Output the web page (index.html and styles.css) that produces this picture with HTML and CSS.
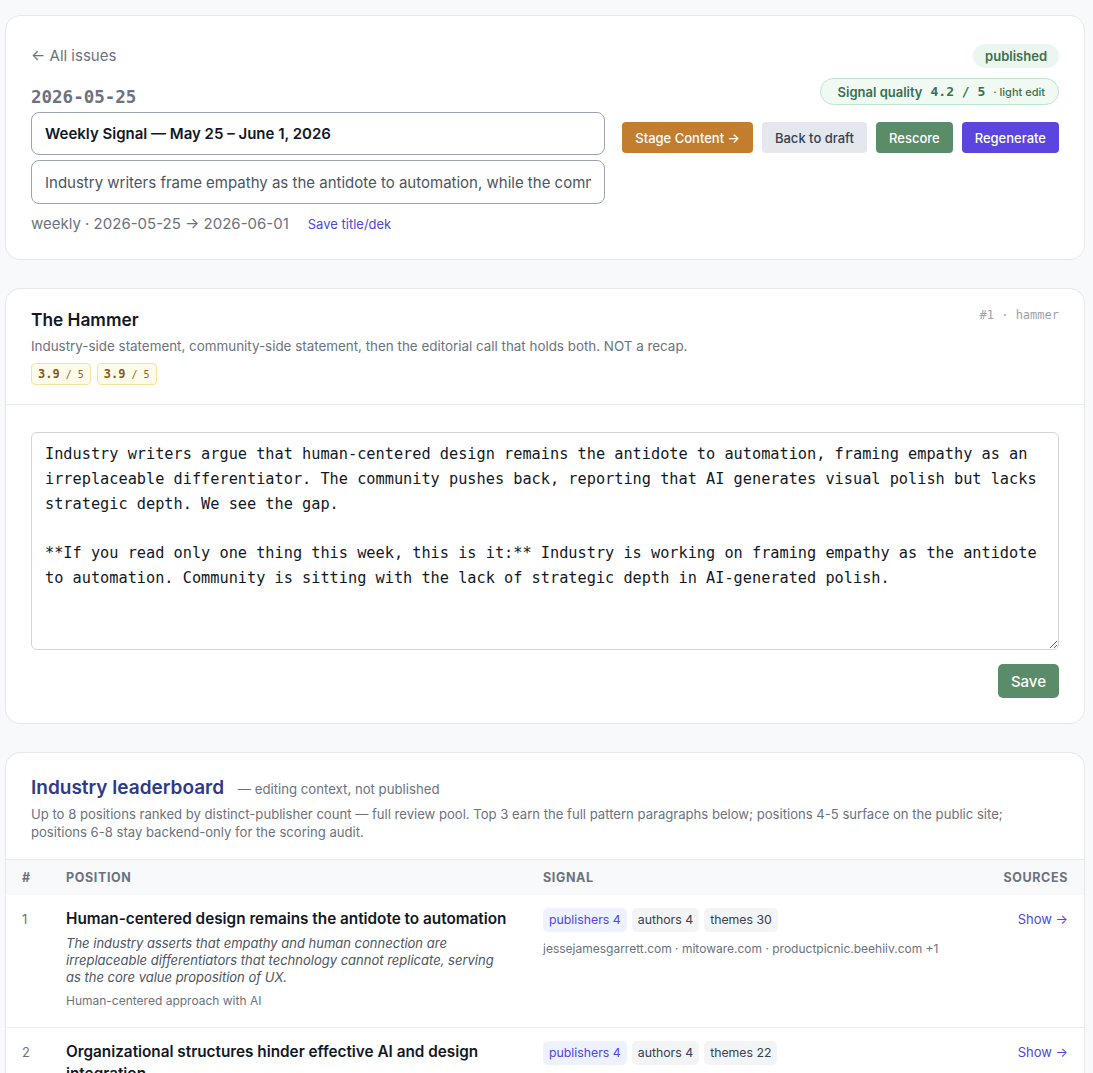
FILE: index.html
```html
<!DOCTYPE html>
<html lang="en">
<head>
    <meta charset="UTF-8">
    <meta name="viewport" content="width=device-width, initial-scale=1.0">
    <title>Weekly Signal — 2026-05-25</title>
    <link rel="stylesheet" href="styles.css">
</head>
<body>

<div class="page">

    <section class="card issue-head">
        <div class="head-left">
            <a class="back" href="#">← All issues</a>
            <div class="issue-date">2026-05-25</div>
            <input class="field field-title" type="text" value="Weekly Signal — May 25 – June 1, 2026">
            <input class="field field-dek" type="text" value="Industry writers frame empathy as the antidote to automation, while the community reports AI polish without depth.">
            <div class="issue-meta">
                <span>weekly · 2026-05-25 → 2026-06-01</span>
                <a class="save-link" href="#">Save title/dek</a>
            </div>
        </div>
        <div class="head-right">
            <span class="pill-status">published</span>
            <span class="pill-quality">Signal quality <b class="mono">4.2 / 5</b> <small>· light edit</small></span>
            <div class="actions">
                <button class="btn btn-stage">Stage Content →</button>
                <button class="btn btn-draft">Back to draft</button>
                <button class="btn btn-green">Rescore</button>
                <button class="btn btn-indigo">Regenerate</button>
            </div>
        </div>
    </section>

    <section class="card">
        <div class="card-head">
            <div class="section-top">
                <h2 class="section-title">The Hammer</h2>
                <span class="section-tag">#1 · hammer</span>
            </div>
            <p class="section-desc">Industry-side statement, community-side statement, then the editorial call that holds both. NOT a recap.</p>
            <div class="scores">
                <span class="score"><b>3.9</b> / 5</span>
                <span class="score"><b>3.9</b> / 5</span>
            </div>
        </div>
        <div class="card-body">
            <textarea class="editor" rows="8">Industry writers argue that human-centered design remains the antidote to automation, framing empathy as an irreplaceable differentiator. The community pushes back, reporting that AI generates visual polish but lacks strategic depth. We see the gap.

**If you read only one thing this week, this is it:** Industry is working on framing empathy as the antidote to automation. Community is sitting with the lack of strategic depth in AI-generated polish.</textarea>
            <div class="save-row">
                <button class="btn btn-green btn-save">Save</button>
            </div>
        </div>
    </section>

    <section class="card">
        <div class="card-head board-head">
            <h2 class="board-title">Industry leaderboard <span>— editing context, not published</span></h2>
            <p class="board-desc">Up to 8 positions ranked by distinct-publisher count — full review pool. Top 3 earn the full pattern paragraphs below; positions 4-5 surface on the public site; positions 6-8 stay backend-only for the scoring audit.</p>
        </div>
        <table class="board">
            <thead>
                <tr>
                    <th class="col-num">#</th>
                    <th class="col-pos">Position</th>
                    <th>Signal</th>
                    <th class="col-src">Sources</th>
                </tr>
            </thead>
            <tbody>
                <tr>
                    <td class="col-num">1</td>
                    <td class="col-pos">
                        <div class="pos-title">Human-centered design remains the antidote to automation</div>
                        <div class="pos-summary">The industry asserts that empathy and human connection are irreplaceable differentiators that technology cannot replicate, serving as the core value proposition of UX.</div>
                        <div class="pos-theme">Human-centered approach with AI</div>
                    </td>
                    <td>
                        <div class="chips">
                            <span class="chip chip-pub">publishers 4</span>
                            <span class="chip">authors 4</span>
                            <span class="chip">themes 30</span>
                        </div>
                        <div class="domains">jessejamesgarrett.com · mitoware.com · productpicnic.beehiiv.com +1</div>
                    </td>
                    <td class="col-src"><a class="show" href="#">Show →</a></td>
                </tr>
                <tr>
                    <td class="col-num">2</td>
                    <td class="col-pos">
                        <div class="pos-title">Organizational structures hinder effective AI and design integration</div>
                        <div class="pos-summary">Teams report that siloed org charts keep design and AI work from meeting early enough to matter.</div>
                        <div class="pos-theme">Org design and AI adoption</div>
                    </td>
                    <td>
                        <div class="chips">
                            <span class="chip chip-pub">publishers 4</span>
                            <span class="chip">authors 4</span>
                            <span class="chip">themes 22</span>
                        </div>
                        <div class="domains">uxdesign.cc · nngroup.com · medium.com +1</div>
                    </td>
                    <td class="col-src"><a class="show" href="#">Show →</a></td>
                </tr>
            </tbody>
        </table>
    </section>

</div>

</body>
</html>
```

FILE: styles.css
```css
body {
    margin: 0;
    background: #f8f9fb;
    font-family: Inter, "Liberation Sans", sans-serif;
    color: #111827;
}
.page {
    width: 1080px;
    margin: 15px 0 0 5px;
    display: flex;
    flex-direction: column;
    gap: 28px;
}
.card {
    background: white;
    border: 1px solid #e5e7eb;
    border-radius: 15px;
    overflow: hidden;
}
.mono {
    font-family: "DejaVu Sans Mono", "Liberation Mono", monospace;
}

/* issue header */
.issue-head {
    display: flex;
    justify-content: space-between;
    padding: 28px 25px 25px 25px;
}
.head-left {
    width: 574px;
    display: flex;
    flex-direction: column;
}
.back {
    font-size: 15px;
    line-height: 20px;
    color: #6b7280;
    text-decoration: none;
    margin-top: 2px;
}
.issue-date {
    font-family: "DejaVu Sans Mono", "Liberation Mono", monospace;
    font-weight: bold;
    font-size: 17.5px;
    line-height: 22px;
    color: #6b7280;
    margin-top: 20px;
}
.field {
    box-sizing: border-box;
    width: 100%;
    border: 1px solid #9ca3af;
    border-radius: 8px;
    padding: 0 13px;
    font-family: Inter, "Liberation Sans", sans-serif;
    font-size: 15px;
    background: white;
}
.field-title {
    height: 43px;
    margin-top: 4px;
    font-weight: 600;
    color: #111827;
}
.field-dek {
    height: 44px;
    margin-top: 5px;
    color: #4b5563;
}
.issue-meta {
    margin-top: 10px;
    font-size: 15px;
    line-height: 20px;
    color: #6b7280;
    display: flex;
    align-items: baseline;
    gap: 19px;
}
.save-link {
    font-size: 13px;
    color: #4f46e5;
    text-decoration: none;
}
.head-right {
    display: flex;
    flex-direction: column;
    align-items: flex-end;
}
.pill-status {
    height: 24px;
    line-height: 24px;
    padding: 0 12px;
    border-radius: 999px;
    background: #eaf6ee;
    color: #3e6e52;
    font-size: 13px;
    font-weight: 600;
}
.pill-quality {
    box-sizing: border-box;
    height: 27px;
    margin-top: 10px;
    padding: 0 13px 0 17px;
    display: flex;
    align-items: center;
    gap: 6px;
    border: 1px solid #bfe5cc;
    border-radius: 999px;
    background: #f0faf3;
    color: #3e6e52;
    font-size: 13px;
    font-weight: 600;
}
.pill-quality b {
    font-size: 13px;
    margin: 0 2px;
}
.pill-quality small {
    font-size: 11px;
    font-weight: 500;
}
.actions {
    display: flex;
    gap: 9px;
    margin-top: 17px;
}
.btn {
    height: 31px;
    padding: 0 13px;
    border: none;
    border-radius: 4px;
    font-family: Inter, "Liberation Sans", sans-serif;
    font-size: 13px;
    font-weight: 500;
    color: white;
    cursor: pointer;
}
.btn-stage { background: #c27d2f; }
.btn-draft { background: #e4e7ee; color: #374151; }
.btn-green { background: #5b8c69; }
.btn-indigo { background: #5a45de; }

/* section cards */
.card-head {
    padding: 19px 25px 19px 25px;
    border-bottom: 1px solid #e9ebef;
}
.section-top {
    display: flex;
    justify-content: space-between;
    align-items: flex-start;
}
.section-title {
    margin: 0;
    font-size: 17.3px;
    line-height: 24px;
    font-weight: 600;
    color: #111827;
}
.section-tag {
    font-family: "DejaVu Sans Mono", "Liberation Mono", monospace;
    font-size: 12px;
    color: #9ca3af;
    margin-top: 0;
}
.section-desc {
    margin: 5px 0 0;
    font-size: 13.4px;
    line-height: 18px;
    color: #6b7280;
}
.scores {
    display: flex;
    gap: 6px;
    margin-top: 8px;
}
.score {
    box-sizing: border-box;
    height: 22px;
    line-height: 20px;
    padding: 0 6px;
    border: 1px solid #f5e2a1;
    border-radius: 4px;
    background: #fffbeb;
    color: #92631e;
    font-family: "DejaVu Sans Mono", "Liberation Mono", monospace;
    font-size: 10px;
}
.score b {
    font-size: 12px;
    color: #855a17;
}
.card-body {
    padding: 27px 25px 25px 25px;
}
.editor {
    display: block;
    box-sizing: border-box;
    width: 100%;
    padding: 9px 13px;
    border: 1px solid #d1d5db;
    border-radius: 6px;
    font-family: "DejaVu Sans Mono", "Liberation Mono", monospace;
    font-size: 15.25px;
    line-height: 24.8px;
    color: #111827;
    resize: vertical;
}
.save-row {
    display: flex;
    justify-content: flex-end;
    margin-top: 14px;
}
.btn-save {
    height: 34px;
    padding: 0 13px;
    font-size: 15px;
    border-radius: 5px;
}

/* leaderboard */
.board-head {
    padding: 22px 25px 18px;
}
.board-title {
    margin: 0;
    font-size: 19px;
    line-height: 26px;
    font-weight: 600;
    color: #2e3a87;
}
.board-title span {
    margin-left: 9px;
    font-size: 13.2px;
    font-weight: 400;
    color: #6b7280;
}
.board-desc {
    max-width: 1000px;
    margin: 3px 0 0;
    font-size: 13.1px;
    line-height: 18px;
    color: #6b7280;
}
.board {
    width: 100%;
    border-collapse: collapse;
    table-layout: fixed;
}
.board th {
    height: 35px;
    padding: 0 16px;
    background: #f8f9fb;
    text-align: left;
    font-size: 12.5px;
    font-weight: 700;
    letter-spacing: 0.05em;
    text-transform: uppercase;
    color: #6b7280;
}
.board td {
    padding: 13px 16px 18px;
    vertical-align: top;
    border-top: 1px solid #eceef1;
}
.board tbody tr:first-child td {
    border-top: none;
}
.col-num {
    width: 12px;
    font-size: 13px;
    line-height: 22px;
    color: #6b7280;
}
.board th.col-pos, .board td.col-pos {
    width: 445px;
}
.board th.col-src, .board td.col-src {
    width: 90px;
    text-align: right;
}
.pos-title {
    font-size: 15.3px;
    line-height: 22px;
    font-weight: 600;
    color: #111827;
}
.pos-summary {
    margin-top: 5px;
    font-size: 13px;
    line-height: 17px;
    font-style: italic;
    color: #4b5563;
}
.pos-theme {
    margin-top: 7px;
    font-size: 12px;
    line-height: 16px;
    color: #6b7280;
}
.chips {
    display: flex;
    gap: 5px;
    margin-top: 0;
}
.chip {
    height: 24px;
    line-height: 24px;
    padding: 0 6px;
    border-radius: 5px;
    background: #f3f4f6;
    color: #374151;
    font-size: 12.3px;
}
.chip-pub {
    background: #eef2ff;
    color: #4f46e5;
}
.domains {
    margin-top: 9px;
    font-size: 12px;
    line-height: 16px;
    color: #6b7280;
}
.show {
    font-size: 13px;
    line-height: 22px;
    color: #4f46e5;
    text-decoration: none;
}
```
